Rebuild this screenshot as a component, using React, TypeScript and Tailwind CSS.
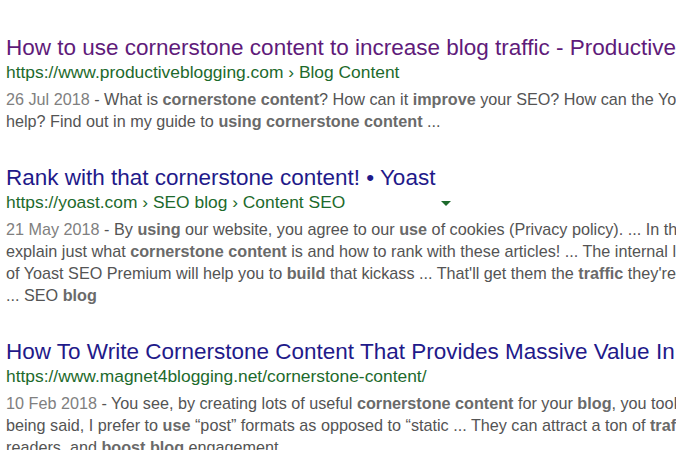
import React from "react";

type Part = string | { b: string };

type Result = {
  title: string;
  visited?: boolean;
  url: string;
  arrow?: boolean;
  date: string;
  lines: Part[][];
};

const results: Result[] = [
  {
    title: "How to use cornerstone content to increase blog traffic - Productive Blogging",
    visited: true,
    url: "https://www.productiveblogging.com › Blog Content",
    date: "26 Jul 2018",
    lines: [
      [" - What is ", { b: "cornerstone content" }, "? How can it ", { b: "improve" }, " your SEO? How can the Yoast SEO"],
      ["help? Find out in my guide to ", { b: "using cornerstone content" }, " ..."],
    ],
  },
  {
    title: "Rank with that cornerstone content! • Yoast",
    url: "https://yoast.com › SEO blog › Content SEO",
    arrow: true,
    date: "21 May 2018",
    lines: [
      [" - By ", { b: "using" }, " our website, you agree to our ", { b: "use" }, " of cookies (Privacy policy). ... In this post"],
      ["explain just what ", { b: "cornerstone content" }, " is and how to rank with these articles! ... The internal linking"],
      ["of Yoast SEO Premium will help you to ", { b: "build" }, " that kickass ... That'll get them the ", { b: "traffic" }, " they're after"],
      ["... SEO ", { b: "blog" }],
    ],
  },
  {
    title: "How To Write Cornerstone Content That Provides Massive Value In 2018",
    url: "https://www.magnet4blogging.net/cornerstone-content/",
    date: "10 Feb 2018",
    lines: [
      [" - You see, by creating lots of useful ", { b: "cornerstone content" }, " for your ", { b: "blog" }, ", you took the"],
      ["being said, I prefer to ", { b: "use" }, " “post” formats as opposed to “static ... They can attract a ton of ", { b: "traffic" }, " from"],
      ["readers, and ", { b: "boost blog" }, " engagement."],
    ],
  },
];

function Line({ parts, date }: { parts: Part[]; date?: string }) {
  return (
    <div className="whitespace-nowrap h-[22px] leading-[22px]">
      {date && <span className="text-[#808080]">{date}</span>}
      {parts.map((p, i) =>
        typeof p === "string" ? (
          <span key={i}>{p}</span>
        ) : (
          <b key={i} className="font-bold text-[#6a6a6a]">
            {p.b}
          </b>
        )
      )}
    </div>
  );
}

function SearchResult({ r }: { r: Result }) {
  return (
    <div className="flex flex-col">
      <div
        className={
          "whitespace-nowrap text-[22.5px] leading-[26px] " +
          (r.visited ? "text-[#5f1b7a]" : "text-[#1f1a8a]")
        }
      >
        {r.title}
      </div>
      <div className="flex items-center whitespace-nowrap text-[17.4px] leading-[23px] text-[#1d6a2c]">
        <span>{r.url}</span>
        {r.arrow && (
          <span className="ml-[96px] mt-[1px] w-0 h-0 border-l-[5px] border-r-[5px] border-t-[5px] border-l-transparent border-r-transparent border-t-[#1d6a2c]" />
        )}
      </div>
      <div className="mt-[4px] text-[16.2px] text-[#545454]">
        {r.lines.map((l, i) => (
          <Line key={i} parts={l} date={i === 0 ? r.date : undefined} />
        ))}
      </div>
    </div>
  );
}

export default function App() {
  return (
    <div
      className="w-[676px] h-[450px] overflow-hidden bg-white pl-[6px] pt-[35px] flex flex-col gap-[33px]"
      style={{ fontFamily: '"Liberation Sans", Arial, sans-serif' }}
    >
      {results.map((r, i) => (
        <SearchResult key={i} r={r} />
      ))}
    </div>
  );
}
